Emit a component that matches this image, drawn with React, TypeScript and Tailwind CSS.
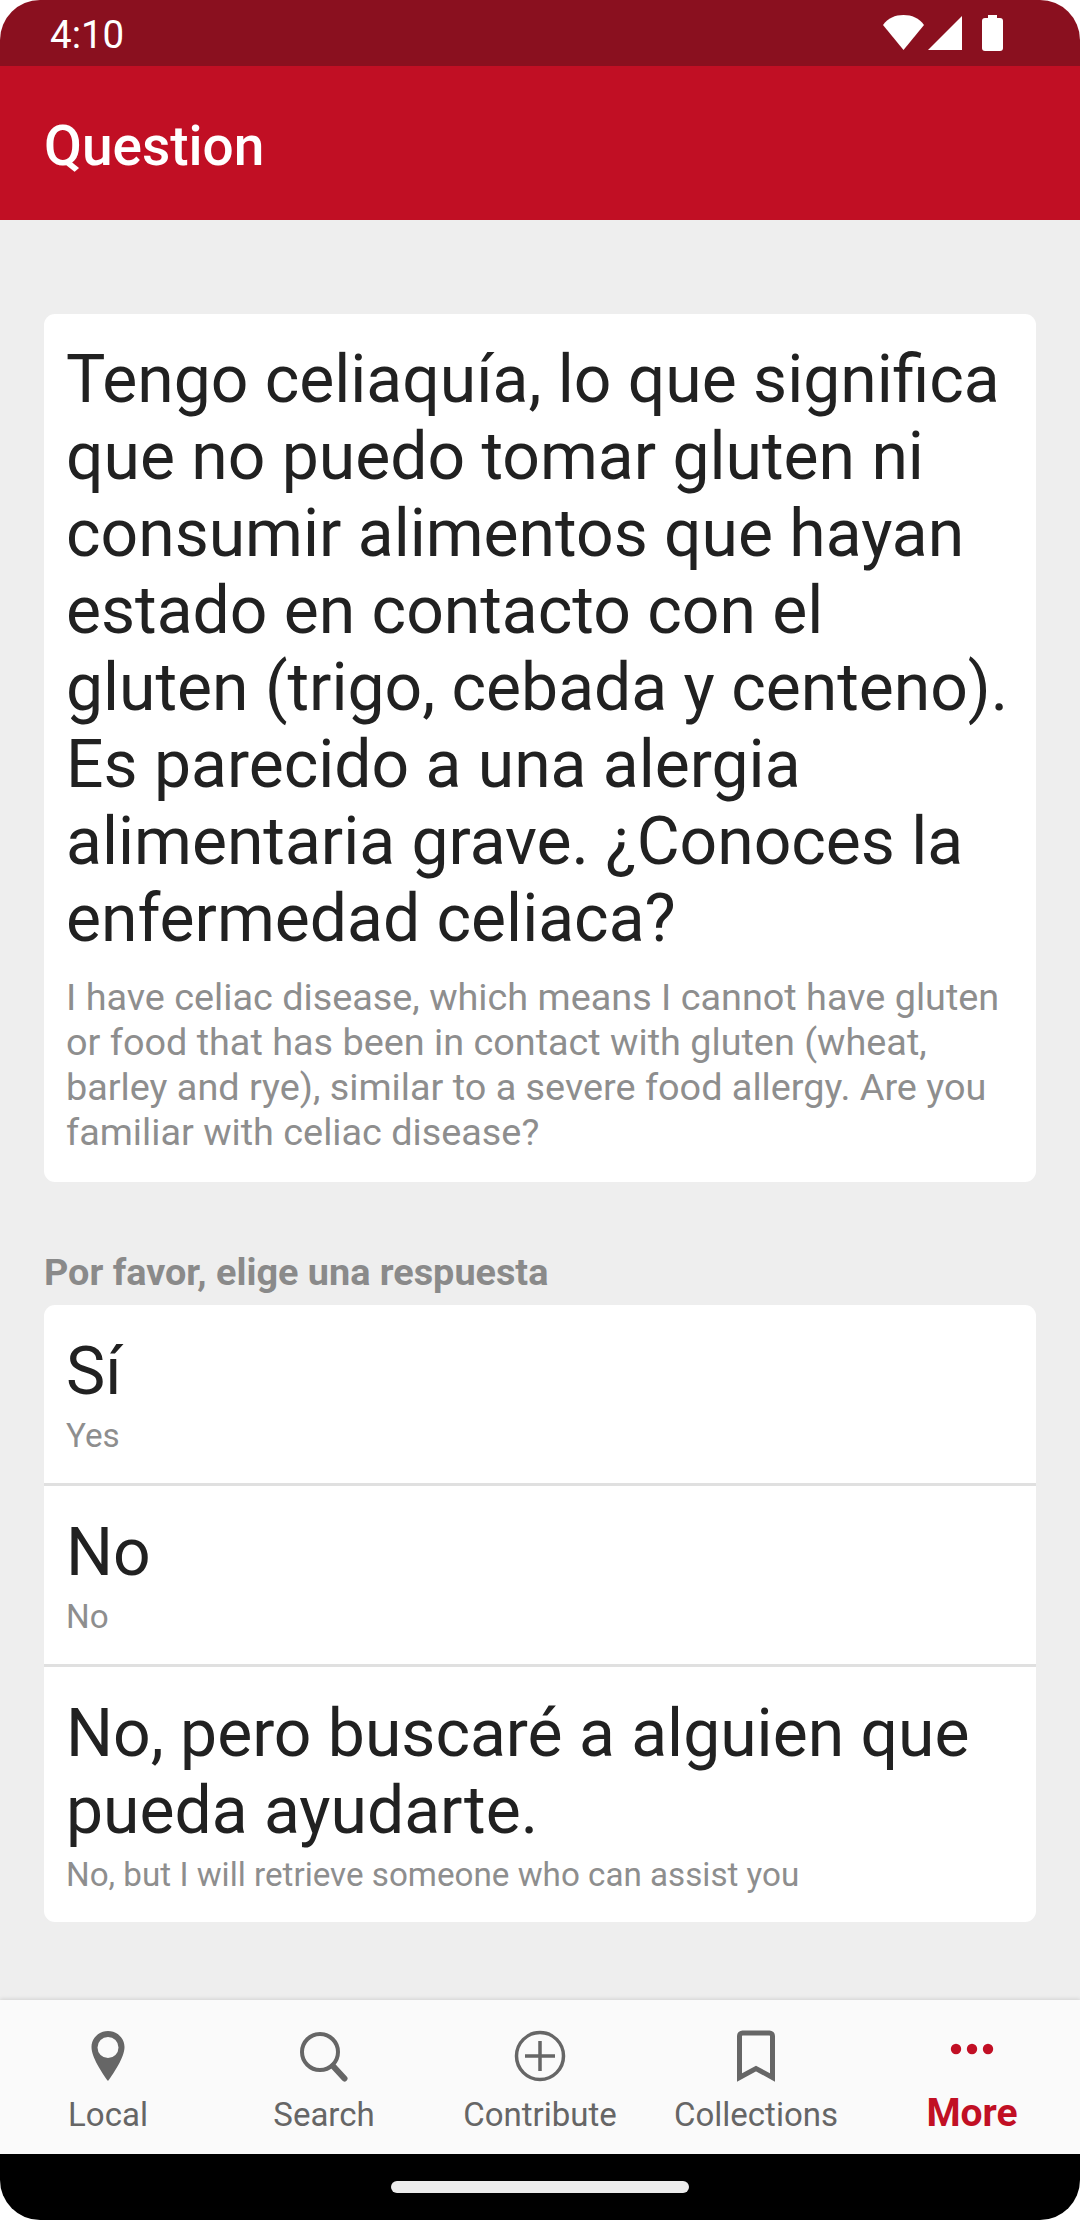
import React from 'react';

const ROBOTO = "font-['Roboto',sans-serif]";

const answers = [
  { es: 'Sí', en: 'Yes' },
  { es: 'No', en: 'No' },
  { es: 'No, pero buscaré a alguien que pueda ayudarte.', en: 'No, but I will retrieve someone who can assist you' },
];

const StatusIcons = () => (
  <svg width="120" height="36" viewBox="0 0 120 36" fill="#fff">
    <path d="M0 10C5 3 12 0 20.500 0S36 3 41 10L20.500 35Z" />
    <path d="M79 1v34H45Z" />
    <rect x="99" y="3" width="21" height="33" rx="3" />
    <rect x="105" y="0" width="9" height="5" />
  </svg>
);

const LocalIcon = () => (
  <svg width="34" height="52" viewBox="0 0 34 52" fill="#666">
    <path fillRule="evenodd" d="M17 1C8 1 .5 8 .5 17 .500 27 11 43 17 51c6-8 16.500-24 16.500-34C33.500 8 26 1 17 1Zm0 6a10.500 10.500 0 1 1 0 21 10.500 10.500 0 0 1 0-21Z" />
  </svg>
);

const SearchIcon = () => (
  <svg width="48" height="52" viewBox="0 0 48 52" fill="none" stroke="#666" strokeLinecap="round">
    <circle cx="20" cy="22" r="18" strokeWidth="4" />
    <path d="M33 36l11.500 12.500" strokeWidth="6" />
  </svg>
);

const ContributeIcon = () => (
  <svg width="52" height="52" viewBox="0 0 52 52" fill="none" stroke="#666">
    <circle cx="26" cy="26" r="23.500" strokeWidth="3.500" />
    <path d="M26 11v30M11 26h30" strokeWidth="3.500" />
  </svg>
);

const CollectionsIcon = () => (
  <svg width="38" height="52" viewBox="0 0 38 52" fill="none" stroke="#666" strokeWidth="5">
    <path d="M2.500 47.500V6a3 3 0 0 1 3-3h27a3 3 0 0 1 3 3v41.500L19 38.500Z" />
  </svg>
);

const MoreIcon = () => (
  <svg width="44" height="52" viewBox="0 0 44 52" fill="#c10f24">
    <circle cx="6" cy="19" r="5.200" />
    <circle cx="22" cy="19" r="5.200" />
    <circle cx="38" cy="19" r="5.200" />
  </svg>
);

const tabs = [
  { label: 'Local', icon: <LocalIcon /> },
  { label: 'Search', icon: <SearchIcon /> },
  { label: 'Contribute', icon: <ContributeIcon /> },
  { label: 'Collections', icon: <CollectionsIcon /> },
  { label: 'More', icon: <MoreIcon />, active: true },
];

export default function App() {
  return (
    <div className={`${ROBOTO} w-[1080px] h-[2220px] flex flex-col bg-white overflow-hidden`}>
      <div className="h-[66px] shrink-0 bg-[#8a101f] rounded-t-[40px] flex items-center justify-between pl-[50px] pr-[77px]">
        <span className="text-[38.5px] leading-none text-white mt-[4px]">4:10</span>
        <StatusIcons />
      </div>
      <div className="h-[154px] shrink-0 bg-[#c10f24] flex items-center px-[44px]">
        <h1 className="text-[55px] font-medium text-white mt-[6px]">Question</h1>
      </div>

      <main className="flex-1 bg-[#eeeeee] px-[44px] pt-[94px]">
        <section className="bg-white rounded-[11px] px-[22px] pt-[27px] pb-[27px]">
          <p className="text-[66px] leading-[77px] text-[#212121]">
            Tengo celiaquía, lo que significa que no puedo tomar gluten ni consumir alimentos que hayan estado en contacto con el gluten (trigo, cebada y centeno). Es parecido a una alergia alimentaria grave. ¿Conoces la enfermedad celiaca?
          </p>
          <p className="text-[37.8px] leading-[45px] text-[#8e8e8e] mt-[18px]">
            I have celiac disease, which means I cannot have gluten or food that has been in contact with gluten (wheat, barley and rye), similar to a severe food allergy. Are you familiar with celiac disease?
          </p>
        </section>

        <h2 className="text-[37.8px] font-bold leading-[45px] text-[#8a8a8a] mt-[68px] mb-[10px]">Por favor, elige una respuesta</h2>
        <section className="bg-white rounded-[11px] divide-y-[3px] divide-[#e0e0e0]">
          {answers.map(a => (
            <div key={a.en} className="px-[22px] pt-[28px] pb-[25px]">
              <p className="text-[66px] leading-[77px] text-[#212121]">{a.es}</p>
              <p className="text-[33.2px] leading-[45px] text-[#8e8e8e] mt-[3px]">{a.en}</p>
            </div>
          ))}
        </section>
      </main>

      <nav className="h-[154px] shrink-0 bg-[#fafafa] flex shadow-[0_-1px_4px_rgba(0,0,0,0.12)]">
        {tabs.map(t => (
          <div key={t.label} className="flex-1 flex flex-col items-center pt-[30px]">
            <div className="h-[52px] flex items-center justify-center">{t.icon}</div>
            <span className={t.active ? 'text-[39px] font-bold leading-[46px] text-[#c10f24] mt-[8px]' : 'text-[33px] leading-[50px] text-[#666666] mt-[8px]'}>{t.label}</span>
          </div>
        ))}
      </nav>
      <div className="h-[66px] shrink-0 bg-black rounded-b-[40px] flex items-center justify-center">
        <div className="w-[298px] h-[12px] rounded-full bg-[#ececec]" />
      </div>
    </div>
  );
}
